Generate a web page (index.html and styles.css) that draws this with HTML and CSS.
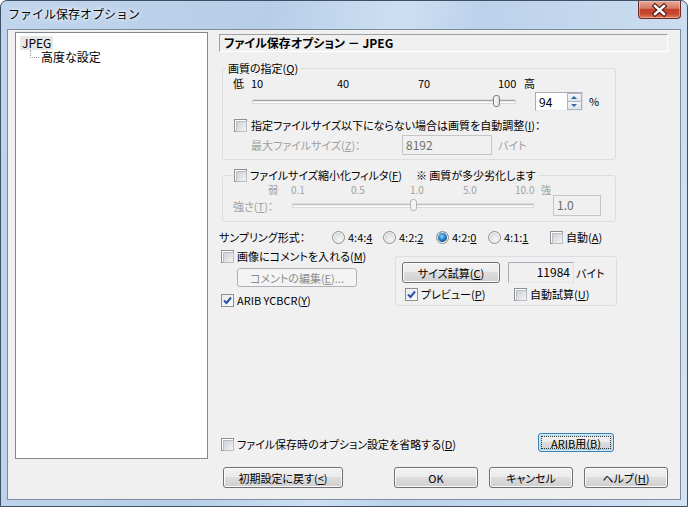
FILE: index.html
```html
<!DOCTYPE html>
<html lang="ja">
<head>
<meta charset="utf-8">
<title>ファイル保存オプション</title>
<link rel="stylesheet" href="styles.css">
</head>
<body>
<div class="window">
  <div class="titlebar">
    <span class="title">ファイル保存オプション</span>
    <span class="close-btn">
      <svg width="43" height="18" viewBox="0 0 43 18">
        <path d="M17 5 L26 13 M26 5 L17 13" stroke="#4a1a12" stroke-width="4.6" stroke-linecap="square"/>
        <path d="M17 5 L26 13 M26 5 L17 13" stroke="#fff" stroke-width="2.4" stroke-linecap="square"/>
      </svg>
    </span>
  </div>

  <div class="client">
    <div class="tree">
      <div class="tree-item"><span class="sel">JPEG</span></div>
      <div class="tree-item child"><span class="branch"></span><span>高度な設定</span></div>
    </div>

    <div class="pane">
      <div class="pane-head">ファイル保存オプション － JPEG</div>

      <fieldset class="group quality">
        <legend>画質の指定(<u>Q</u>)</legend>
        <div class="gbody">
          <div class="ticks q-ticks"><span>低</span><span>10</span><span>40</span><span>70</span><span>100</span><span>高</span></div>
          <div class="slider-row">
            <div class="track q-track"><span class="thumb q-thumb"></span></div>
            <div class="spin">
              <span class="spin-val">94</span>
              <span class="spin-btns"><span class="up"></span><span class="down"></span></span>
            </div>
            <span class="unit">%</span>
          </div>
          <div class="check-row auto-row"><span class="cb"></span>指定ファイルサイズ以下にならない場合は画質を自動調整(<u>I</u>)：</div>
          <div class="size-row dis-text">
            <span class="size-label">最大ファイルサイズ(<u>Z</u>)：</span>
            <span class="edit disabled size-edit">8192</span>
            <span class="size-unit">バイト</span>
          </div>
        </div>
      </fieldset>

      <fieldset class="group filter">
        <legend><span class="cb"></span>ファイルサイズ縮小化フィルタ(<u>F</u>)<span class="note">※ 画質が多少劣化します</span></legend>
        <div class="gbody">
          <div class="ticks f-ticks dis-text"><span>弱</span><span>0.1</span><span>0.5</span><span>1.0</span><span>5.0</span><span>10.0</span><span>強</span></div>
          <div class="strength-row">
            <span class="strength-label dis-text">強さ(<u>T</u>)：</span>
            <div class="track f-track"><span class="thumb f-thumb"></span></div>
            <span class="edit disabled strength-edit">1.0</span>
          </div>
        </div>
      </fieldset>

      <div class="sampling">
        <span class="sampling-label">サンプリング形式：</span>
        <span class="opt o1"><span class="radio"></span>4:4:<u>4</u></span>
        <span class="opt o2"><span class="radio"></span>4:2:<u>2</u></span>
        <span class="opt o3"><span class="radio on"></span>4:2:<u>0</u></span>
        <span class="opt o4"><span class="radio"></span>4:1:<u>1</u></span>
        <span class="opt"><span class="cb"></span>自動(<u>A</u>)</span>
      </div>

      <div class="lower">
        <div class="lower-left">
          <div class="check-row"><span class="cb"></span>画像にコメントを入れる(<u>M</u>)</div>
          <button class="btn disabled comment-btn">コメントの編集(<u>E</u>)...</button>
          <div class="check-row arib-row"><span class="cb checked"><svg width="9" height="9" viewBox="0 0 9 9"><path d="M1 4.5 L3.5 7 L8 1.5" fill="none" stroke="#2a4fa8" stroke-width="2"/></svg></span>ARIB YCBCR(<u>Y</u>)</div>
        </div>
        <div class="size-box">
          <div class="size-calc">
            <button class="btn calc-btn">サイズ試算(<u>C</u>)</button>
            <span class="edit readonly result">11984</span>
            <span>バイト</span>
          </div>
          <div class="size-checks">
            <span class="opt preview"><span class="cb checked"><svg width="9" height="9" viewBox="0 0 9 9"><path d="M1 4.5 L3.5 7 L8 1.5" fill="none" stroke="#2a4fa8" stroke-width="2"/></svg></span>プレビュー(<u>P</u>)</span>
            <span class="opt"><span class="cb"></span>自動試算(<u>U</u>)</span>
          </div>
        </div>
      </div>

      <div class="footer">
        <div class="footer-top">
          <div class="check-row skip-row"><span class="cb"></span>ファイル保存時のオプション設定を省略する(<u>D</u>)</div>
          <button class="btn focused arib-btn">ARIB用(B)</button>
        </div>
        <div class="buttons">
          <button class="btn reset-btn">初期設定に戻す(<u>&lt;</u>)</button>
          <button class="btn dlg-btn">OK</button>
          <button class="btn dlg-btn">キャンセル</button>
          <button class="btn dlg-btn">ヘルプ(<u>H</u>)</button>
        </div>
      </div>
    </div>
  </div>
</div>
</body>
</html>
```

FILE: styles.css
```css
* {
  box-sizing: border-box;
}
body {
  margin: 0;
  width: 688px;
  height: 507px;
  overflow: hidden;
  background: #fff;
  color: #000;
  font: 11px/14px "Noto Sans CJK JP", "Liberation Sans", sans-serif;
  font-feature-settings: "palt";
}
u {
  text-decoration: underline;
  text-underline-offset: 1px;
}

/* window frame */
.window {
  width: 688px;
  height: 507px;
  display: flex;
  flex-direction: column;
  padding: 0 6px 6px;
  border: 1px solid #3e5064;
  border-radius: 7px 7px 0 0;
  background: linear-gradient(100deg, #c0d5ec 0%, #b7cee8 35%, #cde0f2 52%, #bcd2eb 62%, #c8dbef 85%, #d3e3f3 100%);
}
.titlebar {
  height: 28px;
  display: flex;
  justify-content: space-between;
  align-items: flex-start;
}
.title {
  padding: 6px 0 0 1px;
  font-size: 12px;
  font-feature-settings: normal;
  text-shadow: 0 0 6px #fff, 0 0 3px #fff;
}
.close-btn {
  width: 43px;
  height: 18px;
  border: 1px solid #6a2b22;
  border-top: none;
  border-radius: 0 0 4px 4px;
  background: linear-gradient(#e8a899 0%, #d87a67 42%, #c4412b 50%, #c9472f 75%, #e07c63 100%);
  box-shadow: inset 0 0 0 1px rgba(255, 210, 200, 0.45);
}
.close-btn svg {
  display: block;
  margin-left: -1px;
}

.client {
  flex: 1;
  display: flex;
  padding: 2px 12px 11px 7px;
  background: #f0f0f0;
  border: 1px solid #7f8c99;
}

/* tree */
.tree {
  width: 193px;
  height: 427px;
  flex-shrink: 0;
  padding: 3px 0 0 4px;
  font-size: 12px;
  background: #fff;
  border: 1px solid #828790;
}
.tree-item {
  height: 14px;
  display: flex;
  align-items: flex-start;
}
.sel {
  padding: 0 2px;
  background: #e6e6e6;
}
.branch {
  width: 9px;
  height: 8px;
  margin: 0 2px 0 10px;
  border-left: 1px dotted #9a9a9a;
  border-bottom: 1px dotted #9a9a9a;
}

/* right pane */
.pane {
  width: 449px;
  margin-left: 11px;
  display: flex;
  flex-direction: column;
}
.pane-head {
  height: 18px;
  margin-top: 2px;
  padding-left: 4px;
  line-height: 16px;
  font-size: 12px;
  font-weight: bold;
  border-top: 1px solid #a0a0a0;
  border-left: 1px solid #a0a0a0;
  border-bottom: 1px solid #fff;
  border-right: 1px solid #fff;
}

.group {
  margin: 0 0 0 3px;
  padding: 0;
  width: 394px;
  min-width: 0;
  border: 1px solid #d5dfe5;
  border-radius: 3px;
}
.group legend {
  padding: 0 2px;
  line-height: 14px;
  display: flex;
  align-items: center;
}
.quality {
  margin-top: 9px;
}
.quality legend {
  margin-left: 3px;
}
.filter {
  margin-top: 8px;
}
.filter legend {
  margin-left: 9px;
}
.note {
  margin-left: 14px;
}
.gbody {
  padding: 0 0 4px 10px;
}
.filter .gbody {
  padding-bottom: 5px;
}
.dis-text {
  color: #a0a0a0;
}

.ticks {
  display: grid;
  height: 14px;
}
.q-ticks {
  margin-top: 1px;
  grid-template-columns: 18px 86px 81px 80px 26px auto;
}
.f-ticks {
  height: 13px;
  padding-top: 3px;
  font-size: 10px;
  line-height: 10px;
  padding-left: 35px;
  grid-template-columns: 23px 60px 59px 53px 52px 26px auto;
}

/* sliders */
.track {
  position: relative;
  height: 3px;
  background: #e6e8ea;
  border-top: 1px solid #a7a7a7;
  border-bottom: 1px solid #fff;
  box-shadow: 0 0 0 1px #d8dadc;
}
.thumb {
  position: absolute;
  top: -6px;
  width: 7px;
  height: 12px;
  border: 1px solid #7b7b7b;
  border-radius: 3px;
  background: linear-gradient(90deg, #fdfdfd, #e2e2e2);
}
.slider-row {
  height: 20px;
  margin-top: 1px;
  display: flex;
  align-items: center;
}
.q-track {
  width: 262px;
  margin-left: 20px;
}
.q-thumb {
  left: 240px;
}
.spin {
  width: 48px;
  height: 19px;
  margin-left: 20px;
  display: flex;
  background: #fff;
  border: 1px solid #abadb3;
  border-right-color: #dbdfe6;
  border-bottom-color: #e3e9ef;
}
.spin-val {
  flex: 1;
  padding-left: 3px;
  line-height: 17px;
  font-size: 12px;
}
.spin-btns {
  width: 15px;
  display: flex;
  flex-direction: column;
}
.spin-btns span {
  flex: 1;
  position: relative;
  border: 1px solid #a9b5c5;
  background: linear-gradient(#f4f6f9, #dde3ea);
}
.spin-btns .down {
  border-top: none;
}
.spin-btns span::after {
  content: "";
  position: absolute;
  left: 3px;
  border-left: 3.5px solid transparent;
  border-right: 3.5px solid transparent;
}
.spin-btns .up::after {
  top: 2px;
  border-bottom: 3px solid #3b5fa4;
}
.spin-btns .down::after {
  top: 2px;
  border-top: 3px solid #3b5fa4;
}
.unit {
  margin-left: 6px;
}

/* checkboxes and radios */
.check-row {
  height: 14px;
  display: flex;
  align-items: center;
}
.cb {
  width: 13px;
  height: 13px;
  flex-shrink: 0;
  margin-right: 3px;
  padding: 1px;
  border: 1px solid #8f8f8f;
  background: #fff;
}
.cb::before {
  content: "";
  display: block;
  width: 9px;
  height: 9px;
  border: 1px solid #b8bdc3;
  background: linear-gradient(135deg, #cdd1d6, #f4f4f4);
}
.cb.checked::before {
  display: none;
}
.cb.checked {
  padding: 1px;
  background: linear-gradient(135deg, #e9ebee, #fbfbfb);
}
.cb svg {
  display: block;
}
.radio {
  width: 13px;
  height: 13px;
  flex-shrink: 0;
  margin-right: 3px;
  border: 1px solid #8f8f8f;
  border-radius: 50%;
  background: radial-gradient(circle at 60% 65%, #f6f6f6 0%, #d4d6d9 70%, #c2c5c9 100%);
  box-shadow: inset 0 0 0 1px #f4f4f4;
}
.radio.on {
  background: radial-gradient(circle at 45% 40%, #8fd7fa 0%, #2a87cc 35%, #164f95 60%, #e8e8e8 66%, #d4d6d9 100%);
}
.auto-row {
  margin-top: 7px;
  margin-left: 1px;
}
.auto-row .cb {
  margin-right: 4px;
}

.size-row {
  height: 20px;
  margin-top: 3px;
  display: flex;
  align-items: center;
}
.size-label {
  width: 169px;
  padding-left: 18px;
}
.edit {
  display: block;
  height: 20px;
  line-height: 18px;
  padding: 0 3px;
  font-size: 12px;
  border: 1px solid #abadb3;
  border-right-color: #dbdfe6;
  border-bottom-color: #e3e9ef;
  background: #fff;
}
.edit.disabled {
  color: #6d6d6d;
  background: #f0f0f0;
  border-color: #c5c5c5;
}
.edit.readonly {
  background: #f0f0f0;
}
.size-edit {
  width: 90px;
}
.size-unit {
  margin-left: 6px;
}

.strength-row {
  height: 21px;
  display: flex;
  align-items: center;
}
.strength-label {
  width: 60px;
}
.f-track {
  width: 240px;
  border-top-color: #c4c4c4;
}
.f-thumb {
  left: 117px;
  border-color: #b5b5b5;
  background: #f4f4f4;
}
.strength-edit {
  width: 48px;
  height: 21px;
  margin-left: 20px;
}

/* sampling */
.sampling {
  height: 16px;
  margin-top: 7px;
  display: flex;
  align-items: center;
}
.sampling-label {
  width: 113px;
}
.opt {
  display: flex;
  align-items: center;
}
.o1 { width: 51px; }
.o2 { width: 53px; }
.o3 { width: 52px; }
.o4 { width: 62px; }

/* lower area */
.lower {
  margin-top: 4px;
  display: flex;
  align-items: flex-start;
}
.lower-left {
  width: 176px;
}
.lower-left .check-row {
  margin-left: 2px;
}
.arib-row {
  margin-top: 6px;
}

.btn {
  display: block;
  height: 21px;
  padding: 0;
  font: inherit;
  color: #000;
  border: 1px solid #707070;
  border-radius: 3px;
  background: linear-gradient(#f2f2f2 0%, #ebebeb 45%, #dddddd 50%, #cfcfcf 100%);
  box-shadow: inset 0 0 0 1px #fbfbfb;
}
.btn.disabled {
  color: #8d8d8d;
  border-color: #adb2b5;
  background: #f4f4f4;
  box-shadow: none;
}
.btn.focused {
  border-color: #3c7fb1;
  box-shadow: inset 0 0 0 1px #cdeefc, inset 0 0 0 2px rgba(120, 200, 240, 0.45);
  outline: 1px dotted #333;
  outline-offset: -4px;
}
.comment-btn {
  width: 120px;
  height: 19px;
  margin: 5px 0 0 18px;
}

.size-box {
  width: 222px;
  height: 50px;
  margin-top: 7px;
  padding: 5px 0 0 6px;
  border: 1px solid #d5dfe5;
  border-radius: 3px;
}
.size-calc {
  display: flex;
  align-items: center;
}
.calc-btn {
  width: 98px;
}
.result {
  width: 66px;
  height: 21px;
  margin: 0 2px 0 8px;
  text-align: right;
}
.size-checks {
  margin-top: 4px;
  padding-left: 3px;
  display: flex;
}
.preview {
  width: 109px;
}

/* footer */
.footer {
  margin-top: auto;
}
.footer-top {
  display: flex;
  align-items: flex-start;
}
.skip-row {
  margin: 4px 0 0 2px;
}
.arib-btn {
  width: 76px;
  height: 19px;
  margin: 0 54px 0 auto;
}
.buttons {
  margin-top: 15px;
  display: flex;
  gap: 11px;
}
.reset-btn {
  width: 120px;
  margin: 0 40px 0 4px;
}
.dlg-btn {
  width: 84px;
}
```
